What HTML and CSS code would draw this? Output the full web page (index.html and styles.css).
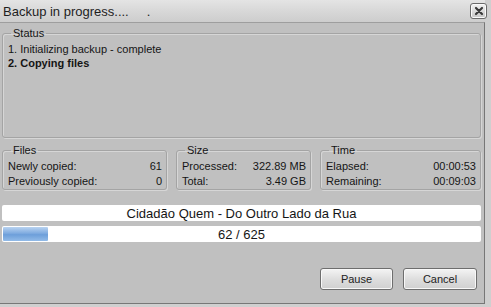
FILE: index.html
```html
<!DOCTYPE html>
<html lang="en">
<head>
  <meta charset="UTF-8">
  <title>Backup in progress</title>
  <link rel="stylesheet" href="styles.css">
</head>
<body>
  <div class="window">
    <div class="titlebar">
      <span class="title">Backup in progress....&nbsp;&nbsp;&nbsp;&nbsp;&nbsp;.</span>
      <button class="close" type="button">
        <svg width="10" height="10" viewBox="0 0 10 10"><path d="M2 2 L8 8 M8 2 L2 8" stroke="#3a3a3a" stroke-width="2.2" stroke-linecap="round"/></svg>
      </button>
    </div>
    <div class="client">
      <!-- Status -->
      <fieldset class="group status">
        <legend>Status</legend>
        <p>1. Initializing backup - complete</p>
        <p class="current">2. Copying files</p>
      </fieldset>

      <!-- Counters -->
      <div class="stats">
        <fieldset class="group files">
          <legend>Files</legend>
          <div class="row"><span>Newly copied:</span><span>61</span></div>
          <div class="row"><span>Previously copied:</span><span>0</span></div>
        </fieldset>
        <fieldset class="group size">
          <legend>Size</legend>
          <div class="row"><span>Processed:</span><span>322.89 MB</span></div>
          <div class="row"><span>Total:</span><span>3.49 GB</span></div>
        </fieldset>
        <fieldset class="group time">
          <legend>Time</legend>
          <div class="row"><span>Elapsed:</span><span>00:00:53</span></div>
          <div class="row"><span>Remaining:</span><span>00:09:03</span></div>
        </fieldset>
      </div>

      <div class="bar track-name"><span>Cidadão Quem - Do Outro Lado da Rua</span></div>
      <div class="bar">
        <div class="fill" style="width: 45px"></div>
        <span>62 / 625</span>
      </div>

      <div class="buttons">
        <button type="button" class="btn">Pause</button>
        <button type="button" class="btn cancel">Cancel</button>
      </div>
    </div>
  </div>
</body>
</html>
```
FILE: styles.css
```css
body {
  margin: 0;
  font-family: "Liberation Sans", Arial, sans-serif;
  font-size: 11px;
  color: #151515;
  background: #c0c0c0;
}
.window {
  width: 491px;
  height: 307px;
  box-sizing: border-box;
  display: flex;
  flex-direction: column;
  background: #d2d2d2;
  border-right: 6px solid #cfcfcf;
  border-bottom: 3px solid #cfcfcf;
}
.titlebar {
  height: 22px;
  flex: none;
  display: flex;
  align-items: center;
  justify-content: space-between;
  padding: 0 0 0 3px;
  background: linear-gradient(to bottom, #e4e4e4 0%, #d9d9d9 45%, #cdcdcd 100%);
}
.title {
  font-size: 13px;
  color: #1e1e1e;
}
.close {
  width: 17px;
  height: 16px;
  margin-right: -2px;
  padding: 0;
  display: flex;
  align-items: center;
  justify-content: center;
  border: 1px solid #6a6a6a;
  border-radius: 3px;
  background: linear-gradient(to bottom, #f2f2f2, #c6c6c6);
  box-shadow: inset 0 0 0 1px #fafafa;
}
.client {
  flex: 1;
  display: flex;
  flex-direction: column;
  padding: 0 3px 0 2px;
  background: #c0c0c0;
  border-top: 1px solid #9e9e9e;
  border-right: 1px solid #777;
  border-bottom: 1px solid #777;
}
.group {
  margin: 0;
  padding: 0 4px 0 5px;
  border: 1px solid #a4a4a4;
  border-radius: 3px;
  box-shadow: inset 1px 1px 0 #d6d6d6, 1px 1px 0 #d6d6d6;
  box-sizing: border-box;
}
.group legend {
  padding: 0 2px;
  margin-left: 3px;
  line-height: 14px;
}
.status {
  margin-top: 3px;
  height: 112px;
}
.status p {
  margin: 0;
  line-height: 14px;
}
.status p:first-of-type {
  margin-top: 2px;
}
.current {
  font-weight: bold;
}
.stats {
  display: flex;
  gap: 9px;
  margin-top: 5px;
}
.stats .group {
  height: 47px;
}
.files { width: 165px; }
.size { width: 135px; }
.time { flex: 1; }
.row {
  display: flex;
  justify-content: space-between;
  line-height: 15px;
}
.row:first-of-type {
  margin-top: 2px;
}
.bar {
  position: relative;
  height: 16px;
  margin-top: 5px;
  background: #fff;
  border-radius: 2px;
  display: flex;
  align-items: center;
  justify-content: center;
  font-size: 13px;
}
.track-name {
  margin-top: 15px;
}
.fill {
  position: absolute;
  left: 1px;
  top: 1px;
  bottom: 1px;
  border-radius: 1px;
  background: linear-gradient(to bottom, #b9d3f0, #7fabe0 45%, #6d9fda 55%, #92bbe8);
}
.bar span {
  position: relative;
}
.buttons {
  display: flex;
  justify-content: flex-end;
  gap: 10px;
  margin-top: 26px;
  padding-right: 4px;
}
.btn {
  width: 73px;
  height: 22px;
  padding: 0;
  font-family: inherit;
  font-size: 11px;
  color: #222;
  border: 1px solid #6e6e6e;
  border-radius: 3px;
  background: linear-gradient(to bottom, #f4f4f4, #dedede 50%, #d0d0d0);
  box-shadow: inset 0 0 0 1px #f8f8f8;
}
.cancel { width: 74px; }
```
